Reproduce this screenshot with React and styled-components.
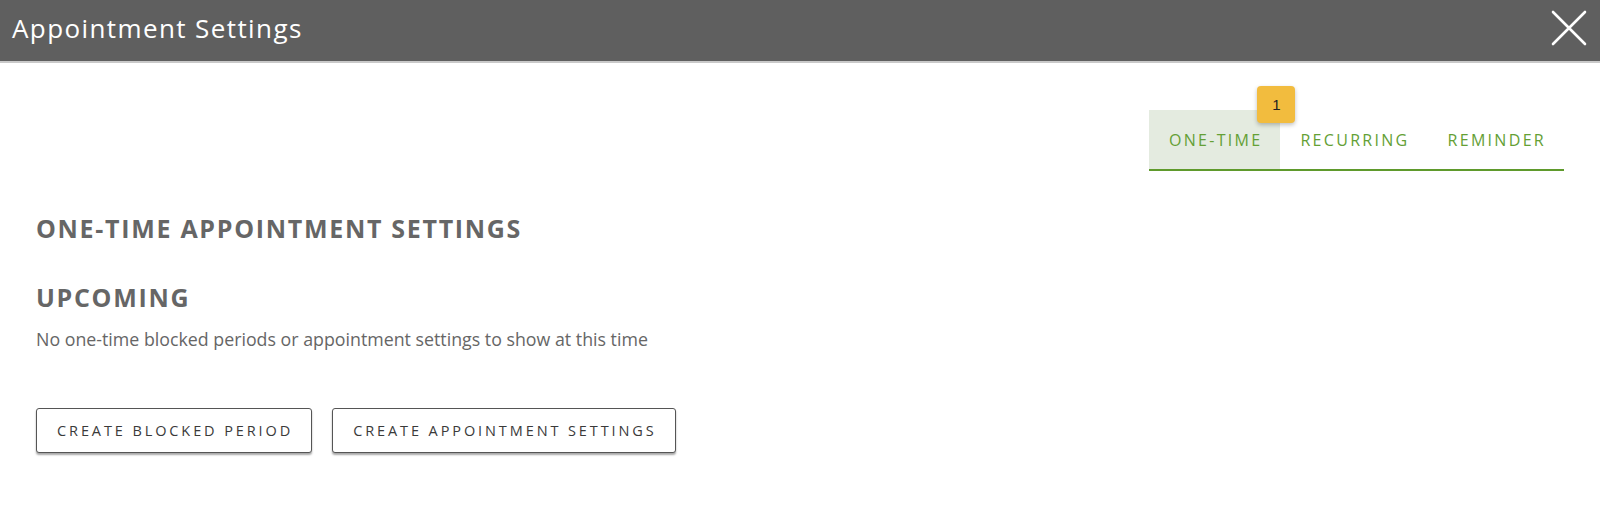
import React from "react";
import styled, { createGlobalStyle } from "styled-components";

const GlobalStyle = createGlobalStyle`
  html, body {
    margin: 0;
    padding: 0;
    background: #ffffff;
    font-family: "Open Sans", Lato, Arial, sans-serif;
  }
`;

const Page = styled.div`
  width: 1600px;
  min-height: 506px;
  background: #ffffff;
`;

const Header = styled.header`
  height: 61px;
  background: #5f5f5f;
  border-bottom: 2px solid #c9c9c9;
  display: flex;
  align-items: center;
  justify-content: space-between;
  padding: 0 12px;
  box-sizing: content-box;
`;

const Title = styled.h1`
  margin: 0 0 5px;
  font-size: 26px;
  font-weight: 400;
  color: #ffffff;
  letter-spacing: 1.4px;
`;

const CloseButton = styled.button`
  background: none;
  border: none;
  padding: 0;
  width: 38px;
  height: 38px;
  display: flex;
  align-items: center;
  justify-content: center;
  cursor: pointer;
  margin-top: -5px;
`;

const Body = styled.main`
  padding: 0 36px;
`;

const TabRow = styled.div`
  display: flex;
  justify-content: flex-end;
  padding-top: 47px;
`;

const TabList = styled.div`
  display: flex;
  border-bottom: 2px solid #5f9a2c;
`;

const Tab = styled.button`
  position: relative;
  height: 59px;
  padding: 0 18px 0 20px;
  border: none;
  background: ${(p) => (p.active ? "#e4ebe0" : "transparent")};
  color: #64a035;
  font-family: inherit;
  font-size: 16px;
  letter-spacing: 2.3px;
  cursor: pointer;
`;

const Badge = styled.span`
  position: absolute;
  top: -24px;
  right: -15px;
  width: 38px;
  height: 37px;
  border-radius: 4px;
  background: #f2bc3e;
  color: #222;
  font-size: 15px;
  font-family: Arial, sans-serif;
  letter-spacing: 0;
  display: flex;
  align-items: center;
  justify-content: center;
  box-shadow: 0 2px 4px rgba(0, 0, 0, 0.25);
`;

const Heading = styled.h2`
  margin: ${(p) => p.$top}px 0 0;
  font-size: 25px;
  font-weight: 700;
  color: #666666;
  line-height: 30px;
  letter-spacing: 1.7px;
`;

const Note = styled.p`
  margin: 15px 0 0;
  font-size: 17.8px;
  color: #666666;
  line-height: 24px;
`;

const Actions = styled.div`
  display: flex;
  gap: 20px;
  margin-top: 57px;
`;

const ActionButton = styled.button`
  height: 45px;
  padding: 0 18px 0 20px;
  background: #ffffff;
  border: 1px solid #555555;
  border-radius: 3px;
  box-shadow: 0 2px 2px rgba(0, 0, 0, 0.35);
  color: #3a3a3a;
  font-family: inherit;
  font-size: 14.5px;
  letter-spacing: 2.9px;
  cursor: pointer;
`;

export default function App() {
  return (
    <Page>
      <GlobalStyle />
      <Header>
        <Title>Appointment Settings</Title>
        <CloseButton aria-label="Close">
          <svg width="36" height="36" viewBox="0 0 36 36">
            <path
              d="M2 2 L34 34 M34 2 L2 34"
              stroke="#ffffff"
              strokeWidth="2.6"
              strokeLinecap="round"
            />
          </svg>
        </CloseButton>
      </Header>
      <Body>
        <TabRow>
          <TabList>
            <Tab active>
              ONE-TIME
              <Badge>1</Badge>
            </Tab>
            <Tab>RECURRING</Tab>
            <Tab>REMINDER</Tab>
          </TabList>
        </TabRow>
        <Heading $top={42}>ONE-TIME APPOINTMENT SETTINGS</Heading>
        <Heading $top={39}>UPCOMING</Heading>
        <Note>No one-time blocked periods or appointment settings to show at this time</Note>
        <Actions>
          <ActionButton>CREATE BLOCKED PERIOD</ActionButton>
          <ActionButton>CREATE APPOINTMENT SETTINGS</ActionButton>
        </Actions>
      </Body>
    </Page>
  );
}
